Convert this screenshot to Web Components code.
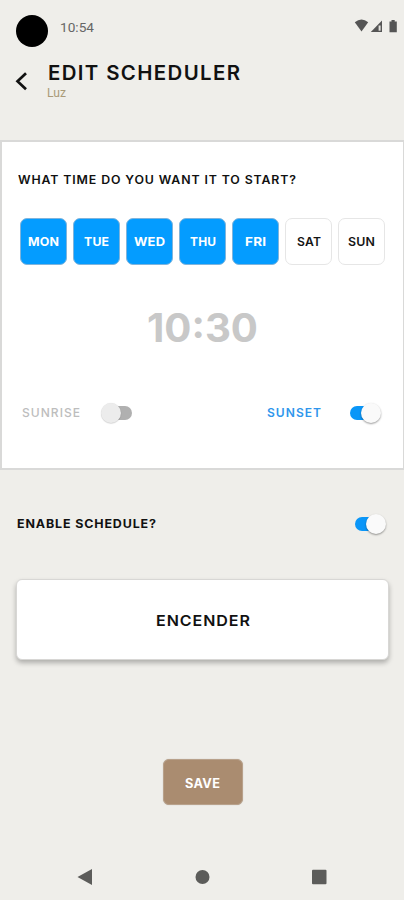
<!DOCTYPE html>
<html lang="en">
<head>
<meta charset="utf-8">
<title>Edit scheduler</title>
<style>
html,body{margin:0;padding:0;background:#efeeea}
body{font-family:Inter,"Liberation Sans",sans-serif;color:#111}
</style>
</head>
<body>
<scheduler-screen></scheduler-screen>
<script>
// Single-line label stretched horizontally to a given width, like a wide geometric face.
class WideLabel extends HTMLElement {
  connectedCallback() {
    const size = +this.getAttribute('size'), w = +this.getAttribute('width');
    const track = +(this.getAttribute('track') || 0);
    const root = this.attachShadow({mode: 'open'});
    root.innerHTML = `<style>
      :host{display:block;flex:none;width:${w}px;height:${Math.ceil(size)}px;font-size:${size}px;line-height:${Math.ceil(size)}px;
        font-weight:${this.getAttribute('weight') || 600};letter-spacing:${track}px}
      span{display:inline-block;white-space:nowrap;transform-origin:0 50%;vertical-align:top}
      </style><span><slot></slot></span>`;
    const span = root.querySelector('span');
    const natural = span.offsetWidth ? span.getBoundingClientRect().width - track : w;
    span.style.transform = `scaleX(${w / natural})`;
  }
}

class StatusBar extends HTMLElement {
  connectedCallback() {
    this.attachShadow({mode: 'open'}).innerHTML = `<style>
      :host{display:flex;height:52px;box-sizing:border-box;padding:15px 6px 0 16px;align-items:flex-start;color:#666}
      .camera{width:32px;height:32px;border-radius:50%;background:#000;margin-right:12px}
      wide-label{font-family:Roboto,sans-serif;margin-top:5px}
      svg{margin-left:auto;margin-top:3px}
      </style>
      <div class="camera"></div><wide-label size="13.5" width="34" weight="400">10:54</wide-label>
      <svg width="44" height="16" viewBox="354 18 44 16">
        <path d="M354.8 22.2Q361.5 17 368.2 22.2L361.5 31.5Z" fill="#555"/>
        <path d="M382 20.5V32H370.8Z" fill="#555"/>
        <path d="M378.6 25.5h2v5.2h-2z" fill="#e4e3df"/>
        <path d="M391.5 20h3.2v1.4h2.1v10.8h-7.3V21.4h2z" fill="#555"/>
      </svg>`;
  }
}

class PageHeader extends HTMLElement {
  connectedCallback() {
    this.attachShadow({mode: 'open'}).innerHTML = `<style>
      :host{display:flex;height:88px;box-sizing:border-box;padding:11px 0 0 15px;align-items:flex-start}
      svg{margin:8px 20px 0 0}
      .sub{font-family:Roboto,sans-serif;color:#aa9a78;margin:4px 0 0 -1px}
      .titles{padding-left:1px}
      </style>
      <svg width="12" height="20" viewBox="0 0 12 20"><path d="M11 2.2L2.5 10.2 11 18.2" fill="none" stroke="#111" stroke-width="2.7"/></svg>
      <div class="titles">
        <wide-label size="19.5" width="192" weight="600" track="1.3">EDIT SCHEDULER</wide-label>
        <wide-label class="sub" size="12" width="19" weight="400">Luz</wide-label>
      </div>`;
  }
}

class DayChip extends HTMLElement {
  connectedCallback() {
    this.attachShadow({mode: 'open'}).innerHTML = `<style>
      :host{display:flex;align-items:center;justify-content:center;height:47px;box-sizing:border-box;
        border:1px solid #e6e6e6;border-radius:7px;background:#fff;color:#151515}
      :host([selected]){background:#049cff;border-color:#7fb4dc;color:#fff}
      </style><wide-label size="12" width="${this.getAttribute('text-width')}"
        weight="${this.hasAttribute('selected') ? 700 : 600}" track=".2">${this.textContent}</wide-label>`;
  }
}

class ToggleSwitch extends HTMLElement {
  connectedCallback() {
    this.attachShadow({mode: 'open'}).innerHTML = `<style>
      :host{display:flex;flex:none;align-items:center;width:31px;height:20px;position:relative}
      .track{width:24px;height:14px;border-radius:7px;background:#b0b0b0;margin-left:auto}
      .knob{position:absolute;left:0;top:0;width:20px;height:20px;border-radius:50%;background:#ececec;
        box-shadow:0 0 1px rgba(0,0,0,.14),0 1px 1px rgba(0,0,0,.12)}
      :host([on]) .track{background:#0a96f8;margin-left:0}
      :host([on]) .knob{left:auto;right:0;background:#fafafa;box-shadow:0 1px 2px rgba(0,0,0,.4)}
      </style><div class="track"></div><div class="knob"></div>`;
  }
}

class TimePanel extends HTMLElement {
  connectedCallback() {
    this.attachShadow({mode: 'open'}).innerHTML = `<style>
      :host{display:block;height:330px;box-sizing:border-box;background:#fff;border:2px solid #d9d9d8;
        border-right-width:1px;padding:32px 18px 0 16px}
      .days{display:grid;grid-template-columns:repeat(7,47px);gap:6px;padding:32px 0 0 2px}
      .time{display:flex;justify-content:center;color:#c8c8c8;margin-top:43px;padding-left:1px}
      .sun{display:flex;align-items:center;margin-top:56px;padding:0 4px 0 4px;color:#bdbdbd}
      .sun toggle-switch:first-of-type{margin-left:21px}
      .sunset{margin-left:auto;color:#2f96ec}
      .sun toggle-switch:last-of-type{margin-left:29px}
      </style>
      <wide-label size="11.5" width="278" weight="600" track=".8">WHAT TIME DO YOU WANT IT TO START?</wide-label>
      <div class="days">
        <day-chip selected text-width="31">MON</day-chip><day-chip selected text-width="25">TUE</day-chip>
        <day-chip selected text-width="31">WED</day-chip><day-chip selected text-width="26">THU</day-chip>
        <day-chip selected text-width="21">FRI</day-chip><day-chip text-width="24">SAT</day-chip>
        <day-chip text-width="27">SUN</day-chip>
      </div>
      <div class="time"><wide-label size="39" width="111" weight="700">10:30</wide-label></div>
      <div class="sun">
        <wide-label size="12" width="58" weight="500" track="1">SUNRISE</wide-label><toggle-switch></toggle-switch>
        <wide-label class="sunset" size="12" width="54" weight="600" track="1">SUNSET</wide-label><toggle-switch on></toggle-switch>
      </div>`;
  }
}

class ActionButton extends HTMLElement {
  connectedCallback() {
    this.attachShadow({mode: 'open'}).innerHTML = `<style>
      :host{display:flex;align-items:center;justify-content:center;box-sizing:border-box;border-radius:6px;
        height:81px;padding-top:2px;background:#fff;border:1px solid #d8d7d5;box-shadow:0 3px 5px rgba(0,0,0,.27);color:#111}
      :host([primary]){width:80px;height:46px;background:#aa8c70;border-color:#b8a18b;color:#fff;box-shadow:0 0 1px #b8aea0}
      </style><slot></slot>`;
  }
}

class NavBar extends HTMLElement {
  connectedCallback() {
    this.attachShadow({mode: 'open'}).innerHTML = `<style>
      :host{display:flex;justify-content:space-between;align-items:center;height:46px;padding:0 77px 0 77px}
      </style>
      <svg width="16" height="16"><path d="M.5 8L15 0V16Z" fill="#5c5c5a"/></svg>
      <svg width="16" height="16"><circle cx="8.5" cy="8" r="7" fill="#5c5c5a"/></svg>
      <svg width="16" height="16"><rect x="1" y=".8" width="14.5" height="14.5" rx="1" fill="#5c5c5a"/></svg>`;
  }
}

class SchedulerScreen extends HTMLElement {
  connectedCallback() {
    this.attachShadow({mode: 'open'}).innerHTML = `<style>
      :host{display:flex;flex-direction:column;width:404px;height:900px;background:#efeeea;overflow:hidden}
      .enable{display:flex;justify-content:space-between;align-items:center;padding:44px 18px 0 17px}
      .main{margin:45px 15px 0 16px}
      .save{display:flex;justify-content:center;padding:99px 0 0 1px}
      nav-bar{margin-top:auto}
      </style>
      <status-bar></status-bar>
      <page-header></page-header>
      <time-panel></time-panel>
      <div class="enable"><wide-label size="11.5" width="139" weight="700" track=".8">ENABLE SCHEDULE?</wide-label><toggle-switch on></toggle-switch></div>
      <action-button class="main"><wide-label size="15" width="94" weight="600" track=".9">ENCENDER</wide-label></action-button>
      <div class="save"><action-button primary><wide-label size="12.5" width="35" weight="700" track=".3">SAVE</wide-label></action-button></div>
      <nav-bar></nav-bar>`;
  }
}

customElements.define('wide-label', WideLabel);
customElements.define('status-bar', StatusBar);
customElements.define('page-header', PageHeader);
customElements.define('day-chip', DayChip);
customElements.define('toggle-switch', ToggleSwitch);
customElements.define('time-panel', TimePanel);
customElements.define('action-button', ActionButton);
customElements.define('nav-bar', NavBar);
customElements.define('scheduler-screen', SchedulerScreen);
</script>
</body>
</html>
